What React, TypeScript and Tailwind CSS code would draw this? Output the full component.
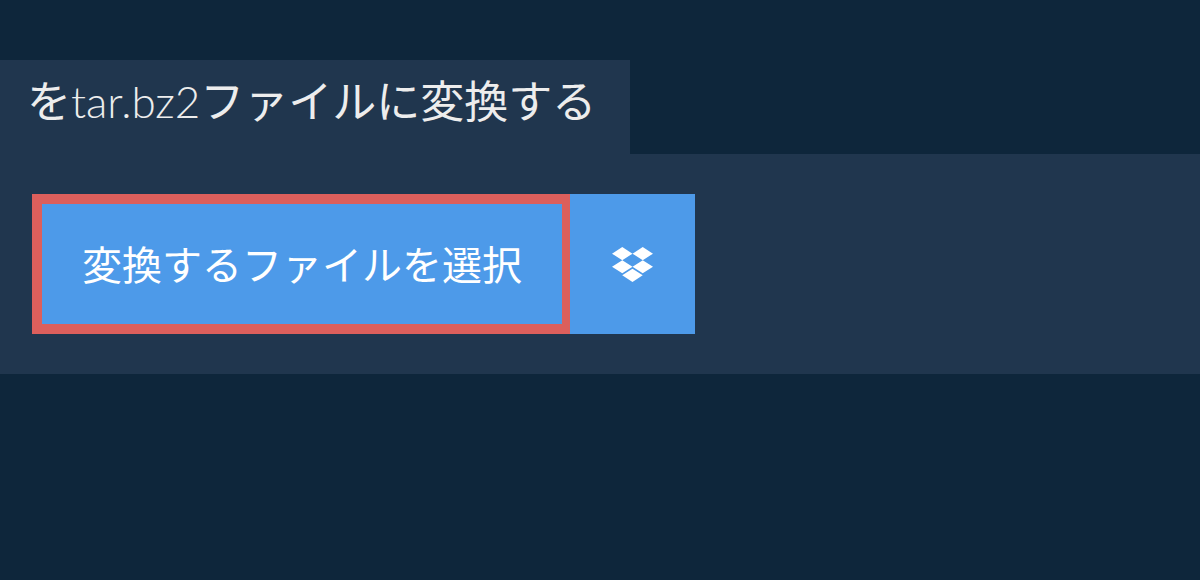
import { FaDropbox } from 'react-icons/fa'

const font = "font-['Lato','Noto_Sans_CJK_JP',sans-serif]"

export default function App() {
  return (
    <div className={`min-h-[580px] bg-[#0e263b] pt-[60px] ${font}`}>
      <div className="w-[630px] h-[94px] bg-[#20364e] pl-[27px] pt-[11px]">
        <h1 className="text-[44px] leading-[60px] font-normal text-[#ededed] whitespace-nowrap">
          を<span className="font-light">tar.bz2</span>ファイルに変換する
        </h1>
      </div>
      <div className="h-[220px] bg-[#20364e] px-[32px] py-[40px]">
        <div className="flex h-[140px]">
          <button className="w-[538px] h-[140px] bg-[#4d9ae9] border-y-[10px] border-l-[10px] border-r-[8px] border-[#dc5f5c] pt-[2px] text-white text-[40px] leading-[60px] whitespace-nowrap">
            変換するファイルを選択
          </button>
          <button className="w-[125px] h-[140px] bg-[#4d9ae9] text-white flex items-center justify-center">
            <FaDropbox size={41} />
          </button>
        </div>
      </div>
    </div>
  )
}
